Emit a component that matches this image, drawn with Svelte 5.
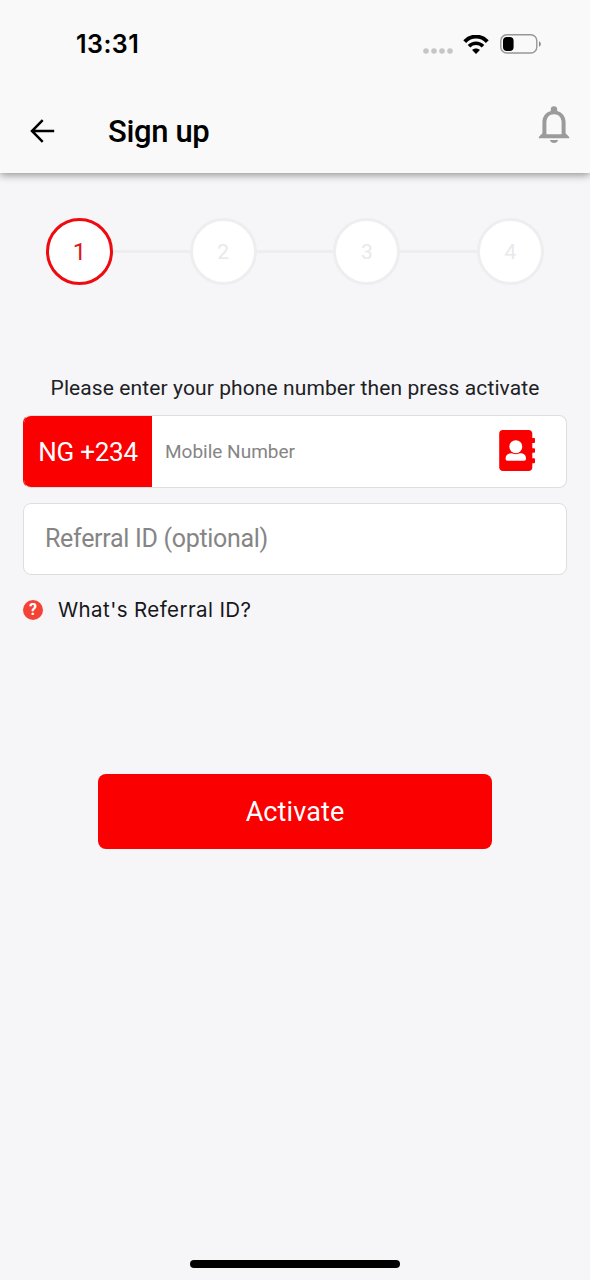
<script lang="ts">
  const steps = [1, 2, 3, 4];
  let current = 1;
  let phone = '';
  let referral = '';
</script>

<div class="screen">
  <header>
    <div class="status">
      <span class="time">13:31</span>
      <div class="indicators">
        <svg class="cell" width="30" height="6" viewBox="0 0 30 6" fill="#c6c6c6">
          <circle cx="3" cy="3" r="2.8" />
          <circle cx="11" cy="3" r="2.8" />
          <circle cx="19" cy="3" r="2.8" />
          <circle cx="27" cy="3" r="2.8" />
        </svg>
        <svg class="wifi" width="26" height="19" viewBox="0 0 26 19" fill="none" stroke="#000">
          <path d="M1.7 6.6C8-.1 18-.1 24.3 6.600" stroke-width="3.9" />
          <path d="M6 11.2c4-4 10-4 14 0" stroke-width="3.6" />
          <path d="M13 19l-3.9-3.9c2.1-2 5.7-2 7.8 0z" fill="#000" stroke="none" />
        </svg>
        <svg class="battery" width="41" height="20" viewBox="0 0 41 20">
          <rect x=".8" y=".8" width="36" height="18.2" rx="6" fill="none" stroke="#979797" stroke-width="1.4" />
          <rect x="3" y="3" width="10.6" height="14" rx="4" />
          <path d="M39 7.2c2.4 1 2.4 4.6 0 5.6z" fill="#888" />
        </svg>
      </div>
    </div>
    <div class="bar">
      <button class="back" aria-label="Back">
        <svg width="26" height="24" viewBox="0 0 26 24" fill="none" stroke="#000" stroke-width="2.5">
          <path d="M24.2 12H2.500M12.700 1.200 2 12 12.700 22.800" />
        </svg>
      </button>
      <h1>Sign up</h1>
      <button class="bell" aria-label="Notifications">
        <svg width="32" height="38" viewBox="0 0 32 38" fill="#9b9b9b">
          <path fill-rule="evenodd" d="M12.8 5V3.4a3.2 3.2 0 0 1 6.4 0V5c5.2 1.4 8.400 5.700 8.400 11.300v11l3.6 3.6v1.300H.8v-1.300l3.600-3.600v-11C4.400 10.700 7.600 6.400 12.800 5zM8.400 28.200h15.200V16.500c0-4.900-2.900-8.300-7.600-8.300s-7.600 3.400-7.600 8.300z" />
          <path d="M11.800 34h8.400c-.6 1.900-2.100 3-4.200 3s-3.600-1.100-4.200-3z" />
        </svg>
      </button>
    </div>
  </header>

  <ol class="steps">
    {#each steps as step}
      {#if step > 1}<li class="line"></li>{/if}
      <li class="step" class:active={step === current}>{step}</li>
    {/each}
  </ol>

  <main>
    <p class="hint">Please enter your phone number then press activate</p>
    <div class="field phone">
      <span class="code">NG +234</span>
      <input type="tel" placeholder="Mobile Number" bind:value={phone} />
      <button class="contacts" aria-label="Contacts">
        <svg width="36" height="41" viewBox="0 0 36 41" fill="#fa0000">
          <path d="M4 0h25.5a3.8 3.8 0 0 1 3.8 3.800V8H35a1 1 0 0 1 1 1v3a1 1 0 0 1-1 1h-1.700v5.300H35a1 1 0 0 1 1 1v2.500a1 1 0 0 1-1 1h-1.700v5.500H35a1 1 0 0 1 1 1v3a1 1 0 0 1-1 1h-1.700v3.900a3.800 3.800 0 0 1-3.800 3.800H4A3.800 3.800 0 0 1 .2 36.700V3.800A3.800 3.800 0 0 1 4 0z" />
          <circle cx="16.8" cy="16.7" r="6.5" fill="#fff" />
          <path d="M6.600 29v-.5c0-3.600 2.500-5.200 5.700-5.200 1.600 0 2.500.9 4.500.9s2.900-.9 4.500-.9c3.200 0 5.700 1.600 5.700 5.200v.5q0 1.800-1.800 1.800H8.400q-1.800 0-1.800-1.800z" fill="#fff" />
        </svg>
      </button>
    </div>
    <div class="field referral">
      <input type="text" placeholder="Referral ID (optional)" bind:value={referral} />
    </div>
    <div class="help">
      <span class="mark">?</span>
      <span class="question">What's Referral ID?</span>
    </div>
    <button class="activate">Activate</button>
  </main>

  <div class="home"></div>
</div>

<style>
  :global(body) {
    margin: 0;
    background: #f6f6f9;
  }

  .screen {
    display: flex;
    flex-direction: column;
    width: 590px;
    height: 1280px;
    overflow: hidden;
    background: #f6f6f9;
    color: #202124;
    font-family: Roboto, sans-serif;
  }

  button {
    padding: 0;
    border: 0;
    background: none;
    font: inherit;
  }

  svg { display: block; }

  header {
    height: 173px;
    background: #f9f9f9;
    box-shadow: 0 2px 8px rgba(0, 0, 0, 0.42);
  }

  .status {
    display: flex;
    align-items: center;
    justify-content: space-between;
    height: 88px;
    padding: 0 49px 0 76px;
  }

  .time {
    color: #000;
    font: 600 25px/30px Inter, sans-serif;
    letter-spacing: 0.45px;
  }

  .indicators {
    display: flex;
    align-items: center;
  }

  .cell { margin: 13px 10px 0 0; }
  .wifi { margin-right: 11px; }

  .bar {
    display: flex;
    align-items: center;
    height: 85px;
    padding: 0 20px 0 30px;
  }

  h1 {
    flex: 1;
    margin: 2px 0 0 52px;
    color: #000;
    font-size: 31px;
    font-weight: 500;
    letter-spacing: -0.35px;
  }

  .bell { margin-top: -11px; }

  .steps {
    display: flex;
    align-items: center;
    justify-content: center;
    height: 67px;
    margin: 45px 0 0;
    padding: 0 46px;
    list-style: none;
  }

  .step {
    box-sizing: border-box;
    flex: none;
    width: 67px;
    height: 67px;
    border: 3px solid #eeeef0;
    border-radius: 50%;
    background: #fff;
    color: #e9e9ea;
    font-size: 21px;
    line-height: 62px;
    text-align: center;
  }

  .step.active {
    border-color: #ee0a0e;
    color: #da1920;
    font-size: 24px;
  }

  .line {
    flex: 1;
    height: 3px;
    background: #eeeef0;
  }

  main {
    display: flex;
    flex: 1;
    flex-direction: column;
    padding: 90px 23px 0;
  }

  .hint {
    margin: 0 0 13px;
    font-size: 21px;
    line-height: 27px;
    letter-spacing: 0.1px;
    text-align: center;
    white-space: nowrap;
  }

  .field {
    box-sizing: border-box;
    display: flex;
    align-items: center;
    height: 73px;
    overflow: hidden;
    border: 1.5px solid #dedee1;
    border-radius: 8px;
    background: #fff;
  }

  .field input {
    flex: 1;
    min-width: 0;
    padding: 0;
    border: 0;
    outline: 0;
    background: none;
    font: 25px Roboto, sans-serif;
  }

  .field input::placeholder {
    color: #858585;
    opacity: 1;
  }

  .phone { border-left-color: #fa0000; }

  .code {
    width: 128px;
    height: 73px;
    background: #fa0000;
    color: #fff;
    font-size: 26px;
    line-height: 74px;
    letter-spacing: -0.25px;
    text-align: center;
  }

  .phone input {
    padding-left: 13px;
    font-size: 19px;
    letter-spacing: 0;
  }

  .contacts { margin: -3px 31px 0 0; }

  .referral {
    height: 72px;
    margin-top: 15px;
  }

  .referral input {
    padding: 0 21px 1px;
    letter-spacing: -0.3px;
  }

  .help {
    display: flex;
    align-items: center;
    gap: 15px;
    height: 30px;
    margin-top: 20px;
  }

  .question {
    color: #17171a;
    font: 20.5px/30px Inter, sans-serif;
    letter-spacing: 0.4px;
  }

  .mark {
    width: 20px;
    height: 20px;
    border-radius: 50%;
    background: #f44336;
    color: #fff;
    font-size: 16px;
    font-weight: 700;
    line-height: 20px;
    text-align: center;
  }

  .activate {
    width: 394px;
    height: 75px;
    margin: 149px auto 0;
    border-radius: 8px;
    background: #fa0000;
    color: #fff;
    font-size: 27px;
    letter-spacing: 0.1px;
  }

  .home {
    width: 210px;
    height: 8px;
    margin: 0 auto 12px;
    border-radius: 4px;
    background: #000;
  }
</style>
